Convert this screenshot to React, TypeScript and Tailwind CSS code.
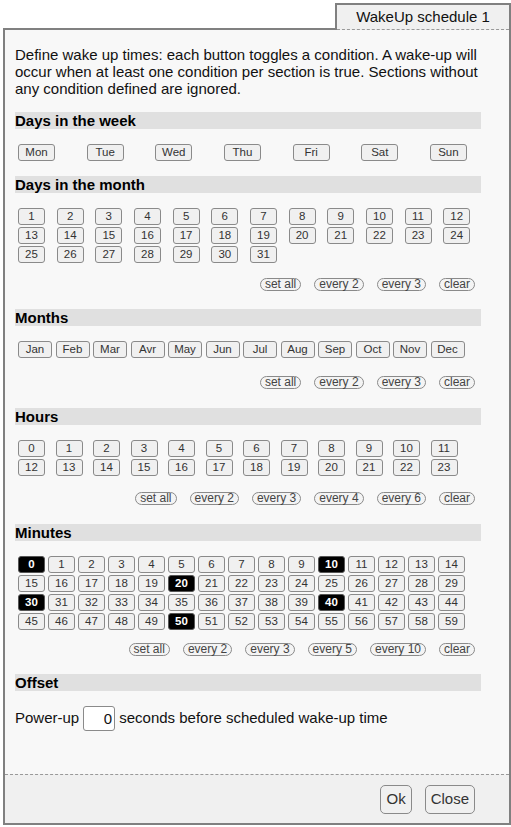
import type { ReactNode } from 'react'

const days = ['Mon', 'Tue', 'Wed', 'Thu', 'Fri', 'Sat', 'Sun']
const months = ['Jan', 'Feb', 'Mar', 'Avr', 'May', 'Jun', 'Jul', 'Aug', 'Sep', 'Oct', 'Nov', 'Dec']
const selectedMinutes = [0, 10, 20, 30, 40, 50]

function range(from: number, to: number) {
  const out: number[] = []
  for (let i = from; i <= to; i++) out.push(i)
  return out
}

function Cell({ label, on, className }: { label: string | number; on?: boolean; className: string }) {
  return (
    <button
      className={
        'flex h-[17px] items-center justify-center rounded-[3px] border text-[11.5px] leading-[15px] ' +
        (on ? 'border-[#555] bg-black font-bold text-white ' : 'border-[#8a8a8a] bg-[#f0f0f0] text-[#333] ') +
        className
      }
    >
      {label}
    </button>
  )
}

function Actions({ items, className = '' }: { items: string[]; className?: string }) {
  return (
    <div className={'flex justify-end gap-[13px] pr-[6px] ' + className}>
      {items.map((t) => (
        <button
          key={t}
          className="flex h-[13px] items-center rounded-full border border-[#8a8a8a] bg-[#f4f4f4] px-[4px] text-[12px] leading-[11px] text-[#444]"
        >
          {t}
        </button>
      ))}
    </div>
  )
}

function Header({ children, className = '' }: { children: ReactNode; className?: string }) {
  return (
    <div className={'h-[17px] bg-[#e0e0e0] text-[15px] font-bold leading-[17px] text-black ' + className}>
      {children}
    </div>
  )
}

export default function App() {
  return (
    <div className="h-[827px] w-[511px] bg-white pl-[3px] pt-[3px] font-['Liberation_Sans',Arial,sans-serif] text-[#111]">
      {/* Tab */}
      <div className="flex justify-end">
        <div className="relative z-10 -mb-[2px] w-[176px] border-2 border-b-0 border-[#808080] bg-[#f0f0f0]">
          <div className="flex h-[24px] items-center justify-center text-[15px]">WakeUp schedule 1</div>
          <div className="border-t border-dashed border-[#999]" />
        </div>
      </div>

      {/* Dialog body */}
      <div className="flex h-[797px] flex-col border-2 border-[#808080] bg-[#f8f8f8]">
        <div className="flex-1 pl-[10px] pr-[28px] pt-[16px]">
          <p className="text-[15px] leading-[17px]">
            Define wake up times: each button toggles a condition. A wake-up will occur when at least one
            condition per section is true. Sections without any condition defined are ignored.
          </p>

          <Header className="mt-[15px]">Days in the week</Header>
          <div className="ml-[3px] mt-[15px] grid grid-cols-[repeat(7,68.67px)]">
            {days.map((d) => (
              <Cell key={d} label={d} className="w-[37px]" />
            ))}
          </div>

          <Header className="mt-[15px]">Days in the month</Header>
          <div className="ml-[3px] mt-[15px] grid grid-cols-[repeat(12,38.67px)] gap-y-[2px]">
            {range(1, 31).map((n) => (
              <Cell key={n} label={n} className="w-[27px]" />
            ))}
          </div>
          <Actions className="mt-[15px]" items={['set all', 'every 2', 'every 3', 'clear']} />

          <Header className="mt-[18px]">Months</Header>
          <div className="ml-[3px] mt-[15px] grid grid-cols-[repeat(12,37.5px)]">
            {months.map((m) => (
              <Cell key={m} label={m} className="w-[34px]" />
            ))}
          </div>
          <Actions className="mt-[18px]" items={['set all', 'every 2', 'every 3', 'clear']} />

          <Header className="mt-[19px]">Hours</Header>
          <div className="ml-[3px] mt-[15px] grid grid-cols-[repeat(12,37.5px)] gap-y-[2px]">
            {range(0, 23).map((n) => (
              <Cell key={n} label={n} className="w-[27px]" />
            ))}
          </div>
          <Actions
            className="mt-[16px]"
            items={['set all', 'every 2', 'every 3', 'every 4', 'every 6', 'clear']}
          />

          <Header className="mt-[19px]">Minutes</Header>
          <div className="ml-[3px] mt-[15px] grid grid-cols-[repeat(15,30px)] gap-y-[2px]">
            {range(0, 59).map((n) => (
              <Cell key={n} label={n} on={selectedMinutes.includes(n)} className="w-[27px]" />
            ))}
          </div>
          <Actions
            className="mt-[13px]"
            items={['set all', 'every 2', 'every 3', 'every 5', 'every 10', 'clear']}
          />

          <Header className="mt-[18px]">Offset</Header>
          <div className="mt-[15px] flex items-center text-[15px]">
            <span>Power-up</span>
            <input
              readOnly
              value="0"
              className="mx-[4px] h-[25px] w-[32px] rounded-[3px] border border-[#8a8a8a] bg-white pr-[2px] text-right text-[15px] outline-none"
            />
            <span>seconds before scheduled wake-up time</span>
          </div>
        </div>

        {/* Footer */}
        <div className="flex h-[49px] justify-end gap-[13px] border-t border-dashed border-[#999] bg-[#f0f0f0] pr-[34px] pt-[10px]">
          <button className="h-[29px] rounded-[5px] border border-[#8a8a8a] bg-[#f0f0f0] px-[5px] text-[15px] text-[#333]">
            Ok
          </button>
          <button className="h-[29px] rounded-[5px] border border-[#8a8a8a] bg-[#f0f0f0] px-[5px] text-[15px] text-[#333]">
            Close
          </button>
        </div>
      </div>
    </div>
  )
}
